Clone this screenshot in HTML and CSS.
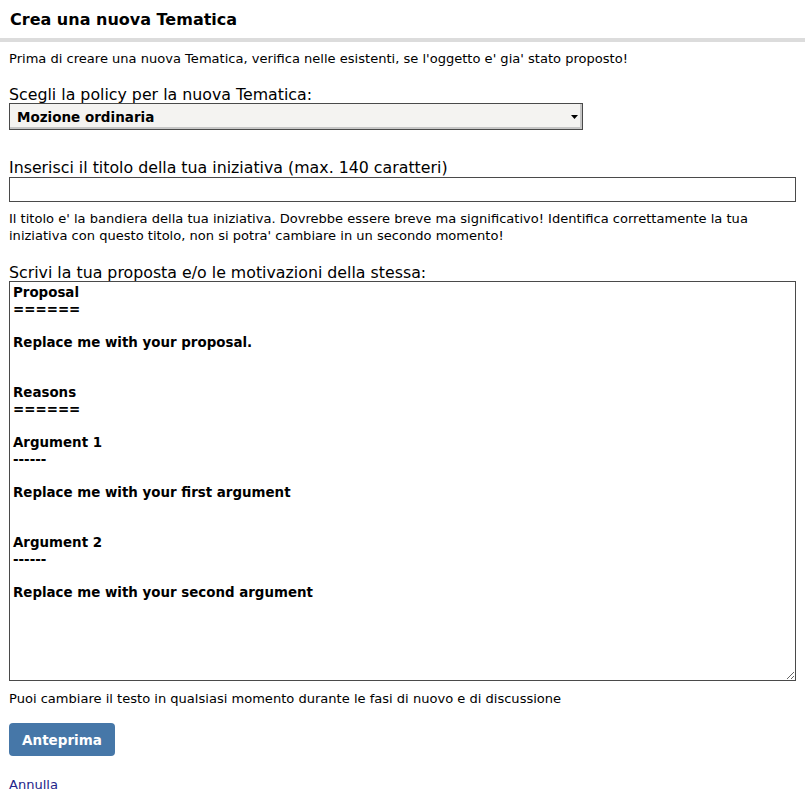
FILE: index.html
```html
<!DOCTYPE html>
<html lang="it">
<head>
<meta charset="utf-8">
<title>Crea una nuova Tematica</title>
<link rel="stylesheet" href="styles.css">
</head>
<body>
<div class="header"><h1>Crea una nuova Tematica</h1></div>
<div class="content">
  <p class="intro">Prima di creare una nuova Tematica, verifica nelle esistenti, se l'oggetto e' gia' stato proposto!</p>
  <form class="form">
    <div class="field field-policy">
      <label class="label" for="policy">Scegli la policy per la nuova Tematica:</label>
      <div class="select-wrap">
        <select id="policy" class="select"><option>Mozione ordinaria</option></select>
        <svg class="arrow" width="7" height="4" viewBox="0 0 7 4"><path d="M0 0H7L3.5 4Z" fill="#000"/></svg>
      </div>
    </div>
    <div class="field field-title">
      <label class="label" for="title">Inserisci il titolo della tua iniziativa (max. 140 caratteri)</label>
      <input id="title" class="input" type="text">
      <p class="help">Il titolo e' la bandiera della tua iniziativa. Dovrebbe essere breve ma significativo! Identifica correttamente la tua iniziativa con questo titolo, non si potra' cambiare in un secondo momento!</p>
    </div>
    <div class="field field-draft">
      <label class="label" for="draft">Scrivi la tua proposta e/o le motivazioni della stessa:</label>
      <textarea id="draft" class="textarea">Proposal
======

Replace me with your proposal.


Reasons
======

Argument 1
------

Replace me with your first argument


Argument 2
------

Replace me with your second argument</textarea>
      <p class="help help-draft">Puoi cambiare il testo in qualsiasi momento durante le fasi di nuovo e di discussione</p>
    </div>
    <div class="actions">
      <button type="button" class="btn">Anteprima</button>
      <a class="cancel" href="#">Annulla</a>
    </div>
  </form>
</div>
</body>
</html>
```
FILE: styles.css
```css
html, body {
  margin: 0;
  padding: 0;
  background: #fff;
  color: #000;
  font-family: "DejaVu Sans", sans-serif;
}
.header {
  border-bottom: 4px solid #dcdcdc;
  padding: 10px 10px 0;
  height: 28px;
}
.header h1 {
  margin: 0;
  font-size: 16px;
  font-weight: bold;
  line-height: 19px;
}
.content {
  padding: 0 9px;
}
.intro {
  margin: 8px 0 0;
  font-size: 13.05px;
  line-height: 17px;
}
.form {
  display: flex;
  flex-direction: column;
}
.field {
  display: flex;
  flex-direction: column;
}
.label {
  font-size: 15.8px;
  line-height: 19px;
  height: 18px;
  margin-top: 18px;
}
.field-title .label {
  margin-top: 28px;
  height: 19px;
}
.field-draft .label {
  margin-top: 19px;
}
.select-wrap {
  position: relative;
  width: 574px;
  height: 27px;
}
.select {
  appearance: none;
  -webkit-appearance: none;
  box-sizing: border-box;
  width: 100%;
  height: 27px;
  margin: 0;
  border: 1px solid #4a4a4a;
  border-radius: 0;
  background: #f4f3f1;
  box-shadow: inset -2px -2px 0 #c6c6c6;
  font-family: "DejaVu Sans", sans-serif;
  font-size: 13.5px;
  font-weight: bold;
  color: #000;
  padding: 0 0 0 7px;
}
.arrow {
  position: absolute;
  right: 5px;
  top: 12px;
}
.input {
  box-sizing: border-box;
  width: 787px;
  height: 25px;
  margin: 0;
  border: 1px solid #4a4a4a;
  border-radius: 0;
  background: #fff;
  font-family: "DejaVu Sans", sans-serif;
  font-size: 13px;
  padding: 0 3px;
}
.help {
  margin: 8px 0 0;
  font-size: 13.05px;
  line-height: 17px;
}
.help-draft {
  margin-top: 9px;
}
.textarea {
  box-sizing: border-box;
  width: 787px;
  height: 400px;
  margin: 0;
  border: 1px solid #4a4a4a;
  border-radius: 0;
  padding: 3px 3px;
  font-family: "DejaVu Sans", sans-serif;
  font-size: 13.4px;
  font-weight: bold;
  line-height: 16.67px;
  color: #000;
  resize: both;
}
.actions {
  display: flex;
  flex-direction: column;
  align-items: flex-start;
  margin-top: 16px;
}
.btn {
  width: 106px;
  height: 33px;
  border: none;
  border-radius: 4px;
  background: #4677a8;
  color: #fff;
  font-family: "DejaVu Sans", sans-serif;
  font-size: 13.5px;
  font-weight: bold;
  padding: 0;
}
.cancel {
  margin-top: 20px;
  font-size: 13.05px;
  line-height: 17px;
  color: #24248a;
  text-decoration: none;
}
```
